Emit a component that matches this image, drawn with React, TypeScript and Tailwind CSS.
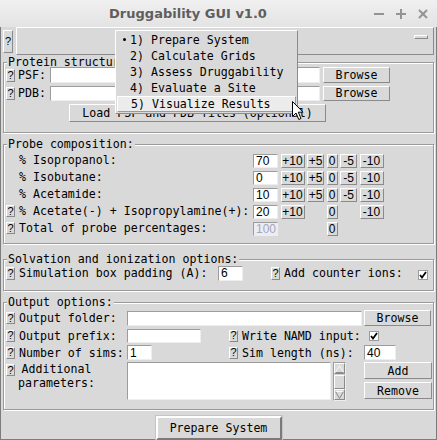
import React from "react";

const mono = "font-['DejaVu_Sans_Mono',monospace] text-[11.6px] leading-[14px] whitespace-nowrap";
const sans = "font-['Liberation_Sans',Arial,sans-serif]";
const raised = "border border-t-white border-l-white border-b-[#8a8a8a] border-r-[#8a8a8a]";
const sunken = "border border-t-[#9c9c9c] border-l-[#9c9c9c] border-b-[#eeeeee] border-r-[#eeeeee]";

const Q = ({ h = "h-[13px]" }: { h?: string }) => (
  <div className={`flex w-[9px] shrink-0 items-center justify-center bg-[#d9d9d9] ${h} ${raised} ${sans} text-[11px] leading-none`}>
    ?
  </div>
);

const Entry = ({ w, value = "", disabled = false, h = "h-full" }: { w: string; value?: string; disabled?: boolean; h?: string }) => (
  <div
    className={`flex shrink-0 items-center pl-[2px] ${w} ${h} ${sunken} ${sans} text-[12px] leading-none ${
      disabled ? "bg-[#ececf4] text-[#a6a6b8]" : "bg-white"
    }`}
  >
    {value}
  </div>
);

const Btn = ({ children, className = "", font = mono }: { children: React.ReactNode; className?: string; font?: string }) => (
  <div className={`flex shrink-0 items-center justify-center bg-[#d9d9d9] ${raised} ${font} ${className}`}>{children}</div>
);

const Check = () => (
  <div className="flex h-[10px] w-[10px] shrink-0 items-center justify-center border border-[#9c9c9c] bg-white">
    <svg width="8" height="8" viewBox="0 0 8 8">
      <polyline points="1,4 3,6.5 7,1" fill="none" stroke="black" strokeWidth="1.8" />
    </svg>
  </div>
);

const Frame = ({ title, className = "", children }: { title: string; className?: string; children: React.ReactNode }) => (
  <fieldset className={`mx-[3px] border border-[#9a9a9a] shadow-[inset_1px_1px_0_#fff,1px_1px_0_#fff] ${className}`}>
    <legend className={`ml-[3px] bg-[#d9d9d9] px-[1px] ${mono} leading-[13px]`}>{title}</legend>
    {children}
  </fieldset>
);

type Row = { q?: boolean; label: string; value: string; btns: string[]; disabled?: boolean };

const probes: Row[] = [
  { label: "% Isopropanol:", value: "70", btns: ["+10", "+5", "0", "-5", "-10"] },
  { label: "% Isobutane:", value: "0", btns: ["+10", "+5", "0", "-5", "-10"] },
  { label: "% Acetamide:", value: "10", btns: ["+10", "+5", "0", "-5", "-10"] },
  { q: true, label: "% Acetate(-) + Isopropylamine(+):", value: "20", btns: ["+10", "", "0", "", "-10"] },
  { q: true, label: "Total of probe percentages:", value: "100", btns: ["", "", "0", "", ""], disabled: true },
];

const menuItems = ["1) Prepare System", "2) Calculate Grids", "3) Assess Druggability", "4) Evaluate a Site", "5) Visualize Results"];

export default function App() {
  return (
    <div className="relative h-[440px] w-[437px] overflow-hidden bg-[#d9d9d9] text-black shadow-[inset_1px_0_0_#7c7c7c,inset_-1px_0_0_#7c7c7c,inset_0_-1px_0_#7c7c7c]">
      {/* title bar */}
      <div className="flex h-[27px] items-center bg-gradient-to-b from-[#f0f0f0] to-[#e3e3e3]">
        <div className="flex-1 pl-[2px] text-center font-['DejaVu_Sans',sans-serif] text-[13px] font-bold text-[#5e5e5e]">
          Druggability GUI v1.0
        </div>
        <div className="flex w-[63px] items-center gap-[12px] pr-[2px]">
          <svg width="10" height="10" viewBox="0 0 10 10">
            <line x1="0" y1="5" x2="10" y2="5" stroke="#939393" strokeWidth="2" />
          </svg>
          <svg width="10" height="10" viewBox="0 0 10 10">
            <line x1="0" y1="5" x2="10" y2="5" stroke="#939393" strokeWidth="2" />
            <line x1="5" y1="0" x2="5" y2="10" stroke="#939393" strokeWidth="2" />
          </svg>
          <svg width="10" height="10" viewBox="0 0 10 10">
            <line x1="1" y1="1" x2="9" y2="9" stroke="#939393" strokeWidth="2" />
            <line x1="9" y1="1" x2="1" y2="9" stroke="#939393" strokeWidth="2" />
          </svg>
        </div>
      </div>

      {/* task selector */}
      <div className="flex h-[28px] gap-[3px] px-[3px]">
        <div className="mt-[3px]">
          <Q h="h-[23px] w-[10px]" />
        </div>
        <div className={`flex flex-1 items-start justify-end pr-[5px] pt-[7px] ${raised}`}>
          <div className={`h-[4px] w-[14px] bg-[#d9d9d9] ${raised}`} />
        </div>
      </div>

      {/* protein structure */}
      <Frame title="Protein structure">
        <div className="-mt-[2px] flex h-[16px] items-center pl-[2px]">
          <Q />
          <div className={`ml-[3px] w-[28px] ${mono}`}>PSF:</div>
          <Entry w="ml-[4px] w-[270px]" />
          <Btn className="ml-[3px] h-full w-[67px]">Browse</Btn>
        </div>
        <div className="mt-[2px] flex h-[16px] items-center pl-[2px]">
          <Q />
          <div className={`ml-[3px] w-[28px] ${mono}`}>PDB:</div>
          <Entry w="ml-[4px] w-[270px]" h="h-[15px]" />
          <Btn className="ml-[3px] h-[15px] w-[67px]">Browse</Btn>
        </div>
        <Btn className="ml-[65px] mt-[3px] mb-[10px] h-[18px] w-[257px]">Load PSF and PDB files (optional)</Btn>
      </Frame>

      {/* probe composition */}
      <Frame title="Probe composition:" className="mt-[4px]">
        <div className="mt-[3px] mb-[9px] flex flex-col gap-[5px]">
          {probes.map((p) => (
            <div key={p.label} className="flex h-[12px] items-center pl-[2px]">
              {p.q ? <Q h="h-[12px]" /> : <div className="w-[9px]" />}
              <div className={`ml-[4px] w-[233px] whitespace-pre ${mono}`}>{p.label}</div>
              <div className="ml-[1px] grid h-full grid-cols-[25px_24px_17px_11px_17px_24px] gap-x-[2.5px]">
                <Entry w="w-[25px]" value={p.value} disabled={p.disabled} />
                {p.btns.map((b, i) =>
                  b ? (
                    <Btn key={i} font={`${sans} text-[12px] leading-none`} className="h-full">
                      {b}
                    </Btn>
                  ) : (
                    <div key={i} />
                  )
                )}
              </div>
            </div>
          ))}
        </div>
      </Frame>

      {/* solvation */}
      <Frame title="Solvation and ionization options:" className="mt-[8px]">
        <div className="-mt-[1px] mb-[9px] flex h-[16px] items-center pl-[2px]">
          <Q />
          <div className={`ml-[4px] w-[189px] ${mono}`}>Simulation box padding (A):</div>
          <Entry w="ml-[10px] w-[25px]" h="h-[15px]" value="6" />
          <div className="ml-[28px]">
            <Q />
          </div>
          <div className={`ml-[4px] w-[119px] ${mono}`}>Add counter ions:</div>
          <div className="ml-[15px] mt-[4px]">
            <Check />
          </div>
        </div>
      </Frame>

      {/* output */}
      <Frame title="Output options:" className="mt-[4px]">
        <div className="mb-[8px] flex flex-col">
          <div className="mt-[1px] flex h-[16px] items-center pl-[2px]">
            <Q h="h-[12px]" />
            <div className={`ml-[4px] w-[108px] ${mono}`}>Output folder:</div>
            <Entry w="w-[235px]" h="h-[15px]" />
            <Btn className="ml-[2px] h-full w-[67px]">Browse</Btn>
          </div>
          <div className="mt-[2px] flex h-[15px] items-center pl-[2px]">
            <Q h="h-[12px]" />
            <div className={`ml-[4px] w-[108px] ${mono}`}>Output prefix:</div>
            <Entry w="w-[74px]" h="h-[14px]" />
            <div className="ml-[28px]">
              <Q h="h-[12px]" />
            </div>
            <div className={`ml-[4px] w-[119px] ${mono}`}>Write NAMD input:</div>
            <div className="ml-[8px]">
              <Check />
            </div>
          </div>
          <div className="mt-[2px] flex h-[15px] items-center pl-[2px]">
            <Q h="h-[12px]" />
            <div className={`ml-[4px] w-[108px] ${mono}`}>Number of sims:</div>
            <Entry w="w-[25px]" h="h-[15px]" value="1" />
            <div className="ml-[77px]">
              <Q h="h-[12px]" />
            </div>
            <div className={`ml-[4px] w-[112px] ${mono}`}>Sim length (ns):</div>
            <Entry w="ml-[10px] w-[32px]" h="h-[15px]" value="40" />
          </div>
          <div className="mt-[2px] flex h-[39px] items-start pl-[2px]">
            <div className="mt-[2px]">
              <Q h="h-[12px]" />
            </div>
            <div className={`ml-[3px] w-[77px] text-center ${mono} leading-[11px]`}>
              Additional
              <br />
              parameters:
            </div>
            <div className={`ml-[32px] h-[38px] w-[204px] bg-white ${sunken}`} />
            <div className={`ml-[2px] flex h-[39px] w-[13px] flex-col bg-[#d0d0d0] ${sunken}`}>
              <div className={`flex h-[11px] items-center justify-center bg-[#d9d9d9] ${raised}`}>
                <svg width="9" height="8" viewBox="0 0 9 8">
                  <polygon points="4.5,0.5 8.5,7.5 0.5,7.5" fill="#d9d9d9" stroke="#f8f8f8" />
                  <line x1="8.5" y1="7.5" x2="0.5" y2="7.5" stroke="#8a8a8a" />
                </svg>
              </div>
              <div className={`mt-[1px] h-[14px] bg-[#d9d9d9] ${raised}`} />
              <div className="flex-1" />
              <div className={`flex h-[11px] items-center justify-center bg-[#d9d9d9] ${raised}`}>
                <svg width="9" height="8" viewBox="0 0 9 8">
                  <polygon points="0.5,0.5 8.5,0.5 4.5,7.5" fill="#d9d9d9" stroke="#8a8a8a" />
                  <line x1="0.5" y1="0.5" x2="8.5" y2="0.5" stroke="#f8f8f8" />
                </svg>
              </div>
            </div>
            <div className="ml-[18px] flex flex-col gap-[3px]">
              <Btn className="h-[17px] w-[68px]">Add</Btn>
              <Btn className="h-[17px] w-[68px]">Remove</Btn>
            </div>
          </div>
        </div>
      </Frame>

      <div className="mt-[5px] flex justify-center">
        <div className="border border-[#c4c4c4] p-0">
          <div
            className={`flex h-[24px] w-[126px] items-center justify-center border-2 border-t-white border-l-white border-b-[#7a7a7a] border-r-[#7a7a7a] bg-[#d9d9d9] ${mono}`}
          >
            Prepare System
          </div>
        </div>
      </div>

      {/* open task menu */}
      <div className={`absolute left-[115px] top-[30px] w-[183px] bg-[#d9d9d9] py-[1px] ${raised} ${mono}`}>
        {menuItems.map((m, i) => (
          <div
            key={m}
            className={`relative flex h-[16px] items-center ${
              i === 4 ? "mx-[1px] border border-t-white border-l-white border-b-[#9a9a9a] border-r-[#9a9a9a] bg-[#ececec] pl-[13px]" : "pl-[14px]"
            }`}
          >
            {i === 0 && <span className="absolute left-[7px] top-[6px] h-[3px] w-[3px] rounded-full bg-black" />}
            {m}
          </div>
        ))}
      </div>

      {/* mouse pointer */}
      <svg className="absolute left-[292px] top-[101px]" width="13" height="20" viewBox="0 0 13 20">
        <path d="M0.5 0.5 L0.5 15.5 L4 12 L6.8 18.5 L9 17.5 L6.3 11.2 L11 11.2 Z" fill="white" stroke="black" strokeWidth="1" />
      </svg>
    </div>
  );
}
